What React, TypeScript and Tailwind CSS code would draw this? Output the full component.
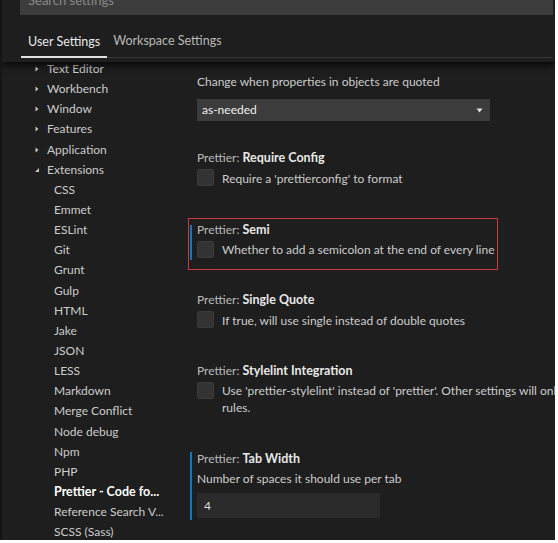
const tree: { label: string; level: 0 | 1; open?: boolean; active?: boolean }[] = [
  { label: 'Text Editor', level: 0 },
  { label: 'Workbench', level: 0 },
  { label: 'Window', level: 0 },
  { label: 'Features', level: 0 },
  { label: 'Application', level: 0 },
  { label: 'Extensions', level: 0, open: true },
  { label: 'CSS', level: 1 },
  { label: 'Emmet', level: 1 },
  { label: 'ESLint', level: 1 },
  { label: 'Git', level: 1 },
  { label: 'Grunt', level: 1 },
  { label: 'Gulp', level: 1 },
  { label: 'HTML', level: 1 },
  { label: 'Jake', level: 1 },
  { label: 'JSON', level: 1 },
  { label: 'LESS', level: 1 },
  { label: 'Markdown', level: 1 },
  { label: 'Merge Conflict', level: 1 },
  { label: 'Node debug', level: 1 },
  { label: 'Npm', level: 1 },
  { label: 'PHP', level: 1 },
  { label: 'Prettier - Code fo...', level: 1, active: true },
  { label: 'Reference Search V...', level: 1 },
  { label: 'SCSS (Sass)', level: 1 },
]

function Twisty({ open }: { open?: boolean }) {
  return open ? (
    <svg width="6" height="6" viewBox="0 0 6 6" className="mr-[7px]">
      <path d="M5 1 L5 5 L1 5 Z" fill="#c5c5c5" />
    </svg>
  ) : (
    <svg width="6" height="6" viewBox="0 0 6 6" className="mr-[7px]">
      <path d="M1.5 0.5 L4.5 3 L1.5 5.5 Z" fill="#c5c5c5" />
    </svg>
  )
}

function Checkbox() {
  return <div className="w-[17px] h-[17px] shrink-0 rounded-[2px] bg-[#333333] border border-[#3a3a3a]" />
}

function Title({ name }: { name: string }) {
  return (
    <div className="h-[18px] leading-[18px] text-[#bbbbbb]">
      Prettier: <span className="font-bold text-[12.5px] text-[#e8e8e8]">{name}</span>
    </div>
  )
}

function BoolSetting({ name, desc }: { name: string; desc: React.ReactNode }) {
  return (
    <div className="pl-[10px]">
      <Title name={name} />
      <div className="flex gap-2 mt-[2px]">
        <Checkbox />
        <div className="leading-[17px] text-[#cccccc] mt-[0.5px]">{desc}</div>
      </div>
    </div>
  )
}

export default function App() {
  return (
    <div className="w-[558px] h-[543px] bg-white" style={{ fontFamily: 'Lato, "Open Sans", sans-serif' }}>
      <div className="w-[555px] h-[540px] bg-[#1e1e1e] border-l-2 border-[#151515] overflow-hidden flex flex-col text-[12px]">
        {/* header */}
        <div className="relative z-10 h-[62px] shrink-0 bg-[#1e1e1e] shadow-[0_3px_7px_rgba(0,0,0,0.8)]">
          <div className="ml-[18px] mr-[2px] -mt-[13px] h-[28px] bg-[#3c3c3c] flex items-center px-[8px] text-[13px] text-[#8a8a8a]">
            Search settings
          </div>
          <div className="ml-[19px] mr-[2px] mt-[16px] border-b border-[#3a3a3a] flex items-end h-[27px]">
            <div className="px-[7px] pt-[1px] h-full flex items-start text-[12.5px] text-[#e8e8e8] border-b-2 border-[#e0e0e0] -mb-px">
              User Settings
            </div>
            <div className="pl-[6px] pt-[1px] h-full flex items-start text-[12.5px] text-[#b8b8b8]">Workspace Settings</div>
          </div>
        </div>

        {/* body */}
        <div className="flex flex-1 overflow-hidden">
          <div className="w-[185px] shrink-0 -mt-[3px] pl-[32px]">
            {tree.map((t) => (
              <div
                key={t.label}
                className={`h-[20.15px] flex items-center whitespace-nowrap ${
                  t.active ? 'font-bold text-[12.5px] text-white' : 'text-[#cccccc]'
                } ${t.level === 1 ? 'pl-[20px]' : ''}`}
              >
                {t.level === 0 && <Twisty open={t.open} />}
                {t.label}
              </div>
            ))}
          </div>

          <div className="flex-1 pt-[11px] whitespace-nowrap">
            <div className="pl-[10px]">
              <div className="h-[18px] leading-[18px] text-[#cccccc]">Change when properties in objects are quoted</div>
              <div className="mt-[8px] w-[293px] h-[22px] bg-[#3c3c3c] flex items-center justify-between pl-[5px] pr-[7px] text-[#f0f0f0]">
                as-needed
                <svg width="7" height="5" viewBox="0 0 7 5">
                  <path d="M0.5 0.5 L6.5 0.5 L3.5 4.5 Z" fill="#e0e0e0" />
                </svg>
              </div>
            </div>

            <div className="mt-[28px]">
              <BoolSetting name="Require Config" desc="Require a 'prettierconfig' to format" />
            </div>

            <div className="mt-[32px] relative">
              <div className="absolute left-[1px] -top-px w-[310px] h-[52px] border border-[#d03a3e]" />
              <div className="relative pt-[2px] pb-[11px]">
                <div className="absolute left-[3px] top-[6px] w-[2px] h-[35px] bg-[#0e7ab8]" />
                <BoolSetting name="Semi" desc="Whether to add a semicolon at the end of every line" />
              </div>
            </div>

            <div className="mt-[22px]">
              <BoolSetting name="Single Quote" desc="If true, will use single instead of double quotes" />
            </div>

            <div className="mt-[33px]">
              <BoolSetting
                name="Stylelint Integration"
                desc={
                  <>
                    Use 'prettier-stylelint' instead of 'prettier'. Other settings will only be fallbacks in case
                    <br />
                    rules.
                  </>
                }
              />
            </div>

            <div className="mt-[34px] relative">
              <div className="absolute left-[3px] top-[2px] w-[2px] h-[68px] bg-[#0e7ab8]" />
              <div className="pl-[10px]">
                <Title name="Tab Width" />
                <div className="h-[19px] leading-[19px] mt-[1px] text-[#cccccc]">Number of spaces it should use per tab</div>
                <div className="mt-[5px] w-[183px] h-[25px] bg-[#2a2a2a] flex items-center pl-[7px] text-[#dddddd]">4</div>
              </div>
            </div>
          </div>
        </div>
      </div>
    </div>
  )
}
